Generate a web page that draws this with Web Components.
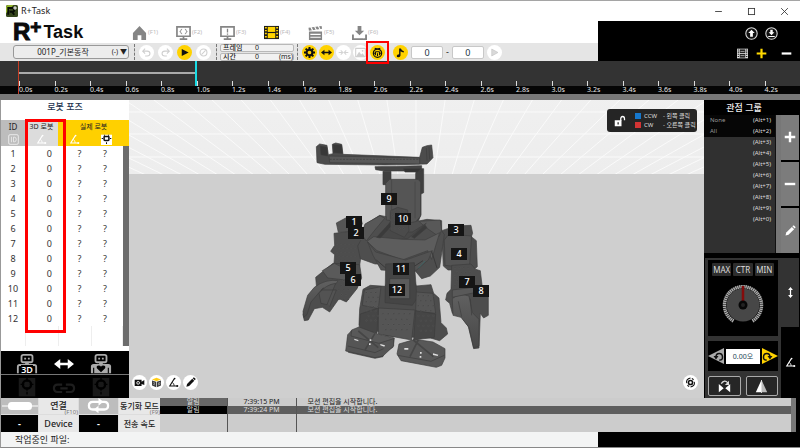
<!DOCTYPE html>
<html lang="ko">
<head>
<meta charset="utf-8">
<title>R+Task</title>
<style>
  html, body { margin: 0; background: #fff; }
  body { font-family: "Noto Sans", "Noto Sans CJK KR", sans-serif; font-size: 9px; line-height: 12px; color: #222; }
</style>
</head>
<body>
<rt-app></rt-app>
<script>
const BASE = `
  *, *::before, *::after { box-sizing: border-box; }
  button { appearance: none; border: 0; padding: 0; margin: 0; background: none; color: inherit; font: inherit; cursor: pointer; display: flex; align-items: center; justify-content: center; }
  input, select { appearance: none; margin: 0; padding: 0; font: inherit; color: inherit; min-width: 0; }
  table { border-collapse: collapse; border-spacing: 0; }
  td, th { padding: 0; font-weight: 400; }
`;

function define(name, css, html) {
  const template = document.createElement('template');
  template.innerHTML = `<style>${BASE}${css}</style>${html}`;
  customElements.define(name, class extends HTMLElement {
    constructor() {
      super();
      this.attachShadow({ mode: 'open' }).append(template.content.cloneNode(true));
    }
  });
}

const film = (fill, line) => `<rect x="0" y="1" width="16" height="14" fill="${line}"/><rect x="4" y="2" width="8" height="5.4" fill="${fill}"/><rect x="4" y="8.6" width="8" height="5.4" fill="${fill}"/><path d="M1 3h2M1 6h2M1 9h2M1 12.500h2M13 3h2M13 6h2M13 9h2M13 12.500h2" stroke="${fill}" stroke-width="1.500"/>`;
const angle = `<path d="M9.500 2L2.500 13H13" fill="none" stroke="currentColor" stroke-width="1.500"/><path d="M6 8Q9 9 9 13" fill="none" stroke="currentColor" stroke-width="1.200"/><circle cx="9.700" cy="2.300" r="1.200" fill="currentColor"/><circle cx="13.500" cy="13" r="1.500" fill="currentColor"/>`;
const pencil = `<path d="M2 14l1-4 7.500-7.500 3 3L6 13z" fill="currentColor"/><path d="M11.200 1.800l1-1q.8-.5 1.500.2l1.300 1.300q.7.7.2 1.500l-1 1z" fill="currentColor"/>`;

const ICONS = {
  app: `<rect width="16" height="16" rx="2" fill="#37471d"/><path d="M0 11L0 3Q0 0 3 0L10 0Z" fill="#92b42c"/><path d="M3 13V4h5q3 0 3 2.500T8 9L11 13M5 9H8" fill="none" stroke="#080d04" stroke-width="2.500"/><path d="M12 1.500v5M9.500 4h5" stroke="#fff" stroke-width="1.300"/>`,
  minimize: `<path d="M2 8h12" stroke="#333" stroke-width="1.500"/>`,
  maximize: `<rect x="2.500" y="2.500" width="11" height="11" fill="none" stroke="#333" stroke-width="1.500"/>`,
  close: `<path d="M2 2l12 12M14 2L2 14" stroke="#333" stroke-width="1.500"/>`,
  home: `<path d="M8 1L1 8.500V16h5v-5h4v5h5V8.500z" fill="#858585"/>`,
  code: `<path d="M1 2h14v10H1zM8 12v3M4 15h8" fill="none" stroke="#858585" stroke-width="1.800"/><path d="M6.500 4.500q-1.300 0-1.300 1.200T4 7q1.200 0 1.200 1.200t1.300 1.200M9.500 4.500q1.300 0 1.300 1.200T12 7q-1.200 0-1.200 1.200T9.500 9.400" fill="none" stroke="#858585"/>`,
  alert: `<path d="M1 2h14v10H1zM8 12v3M4 15h8" fill="none" stroke="#858585" stroke-width="1.800"/><path d="M8 4v4M8 9v1.300" stroke="#858585" stroke-width="1.400"/>`,
  film: film('#ffd400', '#1b1b1b'),
  filmGray: film('#222', '#ddd') + `<path d="M5 5h6M5 11h6" stroke="#ccc"/>`,
  clap: `<path d="M1 7h14v9H1zM0.500 3l14-2 .5 3-14 2z" fill="#858585"/><path d="M3 2l2 4M7 1.500l2 4M11 1l2 4M2.500 10h11M2.500 13h11" stroke="#fff" stroke-width="1.200"/>`,
  download: `<path d="M6 1h4v5h3L8 11 3 6h3z" fill="#858585"/><path d="M1 10v5h14v-5" fill="none" stroke="#858585" stroke-width="2"/><circle cx="12.500" cy="13" r="1" fill="#fff"/>`,
  undo: `<path d="M3 6h6q4 0 4 3.500T9 13H6M6 2.500L2.500 6 6 9.500" fill="none" stroke="#cfcfcf" stroke-width="1.600"/>`,
  redo: `<path d="M13 6H7Q3 6 3 9.500T7 13h3M10 2.500L13.500 6 10 9.500" fill="none" stroke="#cfcfcf" stroke-width="1.600"/>`,
  play: `<path d="M4 3l10 5-10 5z" fill="#111"/>`,
  playOff: `<path d="M4 3l9 5-9 5z" fill="#d9d9d9" stroke="#c5c5c5"/>`,
  stop: `<circle cx="8" cy="8" r="5" fill="none" stroke="#cfcfcf" stroke-width="1.600"/><path d="M5 11l6-6" stroke="#cfcfcf" stroke-width="1.500"/>`,
  gear: `<circle cx="8" cy="8" r="4.200" fill="none" stroke="#111" stroke-width="3"/><path d="M8 0v3M8 13v3M0 8h3M13 8h3M2.400 2.400l2 2M11.600 11.600l2 2M13.600 2.400l-2 2M4.400 11.600l-2 2" stroke="#111" stroke-width="2.800"/>`,
  both: `<path d="M0 8l5-4v3h6V4l5 4-5 4V9H5v3z" fill="currentColor"/>`,
  inward: `<path d="M1 8h5M15 8h-5M4 5l3 3-3 3M12 5L9 8l3 3" fill="none" stroke="#d3d3d3" stroke-width="1.500"/>`,
  image: `<path d="M1 2h14v12H1z" fill="none" stroke="#cfcfcf" stroke-width="1.500"/><path d="M2 13l4-6 3 4 2-2 3 4z" fill="#cfcfcf"/><circle cx="11" cy="5.500" r="1.300" fill="#cfcfcf"/>`,
  pose: `<circle cx="8" cy="9" r="6" fill="none" stroke="#111" stroke-width="1.800"/><path d="M4 2l4 1M12 2L8 3M5 12V8q0-1 1-1h4q1 0 1 1v4M8 9v4M3 9h2M11 9h2" fill="none" stroke="#111" stroke-width="1.600"/>`,
  note: `<path d="M6 2h2.500q1 3 4.500 4l-.5 2Q10 7.500 8 6v6.500q-.3 2.500-3 2.500t-2.500-2T6 10.500z" fill="#111"/>`,
  up: `<circle cx="8" cy="8" r="7" fill="#111" stroke="#ddd" stroke-width="1.300"/><path d="M8 3.500l4 4H9.700V12H6.300V7.500H4z" fill="#fff"/>`,
  down: `<circle cx="8" cy="8" r="7" fill="#111" stroke="#ddd" stroke-width="1.300"/><path d="M6.500 3.500h3v3h2L8 10 4.500 6.500h2zM4 11h8v1.300H4z" fill="#fff"/>`,
  plus: `<path d="M8 1v14M1 8h14" stroke="currentColor" stroke-width="3.200"/>`,
  minus: `<path d="M1 8h14" stroke="currentColor" stroke-width="3.200"/>`,
  pencil, angle,
  id: `<rect x="1" y="1" width="14" height="14" rx="2" fill="none" stroke="#eee" stroke-width="1.300"/><path d="M5 4v8M8 4.500h1q3 0 3 3.500t-3 3.500H8z" fill="none" stroke="#eee" stroke-width="1.200"/>`,
  motor: `<path d="M0 1h16v15H0z" fill="#fff"/><rect x="4.500" y="3.500" width="7" height="6" rx="1" fill="none" stroke="#111" stroke-width="2.200"/><path d="M1 6.500h2M13 6.500h2M8 12v2.500M5 1v1.500M11 1v1.500" stroke="#111" stroke-width="1.500"/>`,
  robot3d: `<rect x="6" y="1" width="12" height="8" rx="2" fill="none" stroke="#aaa" stroke-width="2"/><path d="M9 5h2M13 5h2M10 10.500h4" stroke="#aaa" stroke-width="2"/><path d="M2 21v-7q0-2 2-2h16q2 0 2 2v7" fill="none" stroke="#aaa" stroke-width="2"/>`,
  robot: `<rect x="6" y="1" width="12" height="8" rx="2" fill="none" stroke="#aaa" stroke-width="2"/><path d="M9 5h2M13 5h2M10 10.500h4" stroke="#aaa" stroke-width="2"/><path d="M1 21v-7q0-3 3-3h16q3 0 3 3v7z" fill="#aaa"/><path d="M4 15v6M20 15v6" stroke="#000" stroke-width="1.200"/><path d="M12 20l-4.500-4.500q-1-3 2-3 2 0 2.500 1.500.5-1.500 2.500-1.500 3 0 2 3z" fill="#000"/>`,
  servo: `<rect x="3" y="0" width="18" height="20" fill="#191919"/><circle cx="12" cy="7" r="4.500" fill="none" stroke="#000" stroke-width="2.500"/><path d="M12 0v4M12 10v4M5 7h4M15 7h4M12 15v3" stroke="#000" stroke-width="1.500"/>`,
  chain: `<path d="M10 4H5Q1 4 1 8t4 4h5M14 4h5q4 0 4 4t-4 4h-5M8 8h8" fill="none" stroke="#1e1e1e" stroke-width="2.400"/>`,
  plug: `<path d="M0 8h8M28 8h8" stroke="#fff" stroke-width="1.200"/><rect x="6" y="4" width="24" height="8" rx="3.500" fill="#fff"/>`,
  sync: `<path d="M9 12H6q-4 0-4-4t4-4h7M15 4h3q4 0 4 4t-4 4h-7" fill="none" stroke="#fff" stroke-width="2.400"/><path d="M12 0l5 4-5 4zM12 8l-5 4 5 4z" fill="#fff"/>`,
  camera: `<path d="M1 4h10v9H1zM11 7l4-2.500v7L11 10z" fill="#111"/><circle cx="6" cy="8.500" r="2" fill="#111" stroke="#fff" stroke-width="1.300"/>`,
  cube: `<path d="M8 1l6.500 2.500L8 6 1.500 3.500z" fill="#ffcd17"/><path d="M1.500 5L7.500 7v8l-6-2.500zM14.500 5L8.500 7v8l6-2.500z" fill="#3a3a3a"/><path d="M3 7.500l2 .7v3l-2-.7M11 8.500l2-.6v2.800l-2 .8z" fill="none" stroke="#aaa"/>`,
  orbit: `<circle cx="8" cy="8" r="3" fill="none" stroke="#111" stroke-width="2.300"/><path d="M2.500 9Q1 3 8 1.500M13.500 7Q15 13 8 14.500M3.500 12l2.500 2M10 2l2.500 2" fill="none" stroke="#111" stroke-width="1.500"/>`,
  lock: `<rect x="1" y="7" width="9" height="8" fill="#fff"/><path d="M9 8V5q0-3 2.500-3T14 5v2" fill="none" stroke="#fff" stroke-width="1.700"/><path d="M5.500 9.500v3" stroke="#222" stroke-width="1.700"/>`,
  updown: `<path d="M8 3v10" stroke="#fff" stroke-width="1.800"/><path d="M8 0l3.500 4.500h-7zM8 16l3.500-4.500h-7z" fill="#fff"/>`,
  left: `<path d="M16 0v16L0 8z" fill="#aaa"/><path d="M8 9q0-3.500 3.200-3.500T14.500 9t-3.200 3" fill="none" stroke="#111" stroke-width="1.500"/><path d="M5.500 8h5L8 11.500z" fill="#111"/>`,
  right: `<path d="M0 0v16l16-8z" fill="#ffd200"/><path d="M8 9q0-3.500-3.200-3.500T1.500 9t3.200 3" fill="none" stroke="#111" stroke-width="1.500"/><path d="M10.500 8h-5L8 11.500z" fill="#111"/>`,
  flip: `<path d="M1 5v10l6-5zM15 5v10l-6-5z" fill="#fff"/><path d="M4 4.500Q8-1 12 3.500" fill="none" stroke="#ddd" stroke-width="1.600"/><path d="M13.500 1v5h-5z" fill="#ddd"/>`,
  mirror: `<path d="M7.500 1v14H1z" fill="#fff"/><path d="M8.500 1v14H15z" fill="#bbb"/><path d="M8 0v16" stroke="#fff"/>`
};
const BOXES = { robot3d: '0 0 24 22', robot: '0 0 24 22', servo: '0 0 24 22', chain: '0 0 24 16', plug: '0 0 36 16', sync: '0 0 24 16' };

customElements.define('rt-icon', class extends HTMLElement {
  constructor() { super(); this.attachShadow({ mode: 'open' }); }
  connectedCallback() {
    const name = this.getAttribute('name');
    this.shadowRoot.innerHTML = `<style>:host{display:block;flex:none;width:var(--icon,12px)}svg{display:block;width:100%;height:auto;overflow:visible}</style>
      <svg viewBox="${BOXES[name] || '0 0 16 16'}" aria-hidden="true">${ICONS[name] || ''}</svg>`;
  }
});

define('rt-round', `
  :host { display: block; flex: none; position: relative; }
  button { width: 15px; height: 15px; border-radius: 50%; background: #fff; --icon: 11px; color: #111; }
  :host([on]) button { background: #ffd200; }
  :host([marked])::after { content: ""; position: absolute; inset: -4px; border: 2px solid #f00; }
`, `<button><slot></slot></button>`);

define('rt-titlebar', `
  :host { display: flex; align-items: center; height: 21px; padding: 0 10px 0 6px; background: #fff; border-top: 1px solid #a5a5a5; font-size: 9px; gap: 3px; box-sizing: border-box; }
  span { flex: 1; }
  nav { display: flex; gap: 21px; --icon: 9px; }
  button { width: 12px; height: 16px; }
`, `<rt-icon name="app"></rt-icon><span>R+Task</span>
  <nav><button aria-label="Minimize"><rt-icon name="minimize"></rt-icon></button><button aria-label="Maximize"><rt-icon name="maximize"></rt-icon></button><button aria-label="Close"><rt-icon name="close"></rt-icon></button></nav>`);

define('rt-nav', `
  :host { display: flex; align-items: center; height: 22px; padding-left: 13px; background: #fff; }
  .logo { display: flex; width: 119px; font: 700 18px/22px "Liberation Sans", sans-serif; color: #0b0b0b; }
  .r { font-size: 24px; -webkit-text-stroke: 1px #0b0b0b; }
  .p { font-size: 19px; line-height: 12px; -webkit-text-stroke: 1px #0b0b0b; }
  .t { padding-left: 2px; }
  button { width: 44px; justify-content: flex-start; gap: 1px; font-size: 6px; color: #bbb; --icon: 15px; }
`, `<div class="logo"><span class="r">R</span><span class="p">+</span><span class="t">Task</span></div>
  ${['home', 'code', 'alert', 'film', 'clap', 'download'].map((n, i) => `<button><rt-icon name="${n}"></rt-icon>(F${i + 1})</button>`).join('')}`);

define('rt-toolbar', `
  :host { display: flex; align-items: center; height: 18px; padding-left: 13px; background: #e5e5e5; }
  .file { display: grid; width: 116px; height: 14px; align-items: center; }
  .file > * { grid-area: 1 / 1; }
  select { width: 100%; height: 14px; border: 1px solid #999; border-radius: 3px; background: #ededed; text-align: center; text-align-last: center; font-size: 8px; padding-right: 16px; }
  .file span { justify-self: end; padding-right: 2px; font-size: 7px; pointer-events: none; }
  i { width: 0; height: 16px; border-left: 1px dashed #777; }
  .group { display: flex; align-items: center; gap: 4px; }
  .time { display: grid; gap: 1px; width: 74px; font-size: 7px; line-height: 7px; }
  label { display: flex; height: 8px; border: 1px solid #b8b8b8; border-radius: 2px; background: #f1f1f1; padding-left: 2px; align-items: center; }
  label span { width: 24px; font-weight: 500; }
  label input { width: 20px; border: 0; background: none; text-align: center; height: 7px; }
  label em { flex: 1; text-align: right; font-style: normal; }
  .num { width: 32px; height: 13px; border: 1px solid #c8c8c8; border-radius: 2px; background: #fff; text-align: center; color: #234; }
`, `<div class="file"><select aria-label="File"><option>001P_기본동작</option></select><span>(-) <b>▼</b></span></div>
  <i style="margin:0 4px 0 5px"></i>
  <div class="group">
    <rt-round><rt-icon name="undo"></rt-icon></rt-round><rt-round><rt-icon name="redo"></rt-icon></rt-round>
    <rt-round on><rt-icon name="play"></rt-icon></rt-round><rt-round><rt-icon name="stop"></rt-icon></rt-round></div>
  <i style="margin:0 3px 0 5px"></i>
  <div class="time"><label><span>프레임</span><input value="0"></label><label><span>시간</span><input value="0"><em>(ms)</em></label></div>
  <i style="margin:0 4px 0 3px"></i>
  <div class="group" style="gap:2px">
    <rt-round on><rt-icon name="gear"></rt-icon></rt-round><rt-round on><rt-icon name="both"></rt-icon></rt-round>
    <rt-round><rt-icon name="inward"></rt-icon></rt-round><rt-round><rt-icon name="image"></rt-icon></rt-round>
    <rt-round on marked><rt-icon name="pose"></rt-icon></rt-round></div>
  <div class="group" style="padding-left:8px;gap:3px">
    <rt-round on><rt-icon name="note"></rt-icon></rt-round><input class="num" value="0" aria-label="From"><span>-</span><input class="num" value="0" aria-label="To">
    <rt-round><rt-icon name="playOff"></rt-icon></rt-round></div>`);

define('rt-header', `
  :host { display: grid; grid-template-columns: minmax(0, 598fr) minmax(0, 202fr); height: 40px; }
  .tools { background: #000; display: grid; grid-template-rows: 25px 15px; }
  .tools div { display: flex; justify-content: flex-end; align-items: center; }
  .a { gap: 7px; padding-right: 22px; --icon: 13px; }
  .b { gap: 14px; padding-right: 8px; --icon: 11px; color: #fff; }
  .y { color: #ffd900; }
`, `<div><rt-nav></rt-nav><rt-toolbar></rt-toolbar></div>
  <div class="tools"><div class="a"><button aria-label="Upload"><rt-icon name="up"></rt-icon></button><button aria-label="Download"><rt-icon name="down"></rt-icon></button></div>
  <div class="b"><button aria-label="Frames" style="margin-right:-6px"><rt-icon name="filmGray"></rt-icon></button><button class="y" aria-label="Add"><rt-icon name="plus"></rt-icon></button><button aria-label="Remove"><rt-icon name="minus"></rt-icon></button></div></div>`);

define('rt-timeline', `
  :host { display: block; height: 39px; padding-left: 18px; background: linear-gradient(#333 0 25px, #050505 25px 33px, #777 33px); overflow: hidden; }
  .track { position: relative; display: grid; grid-template-columns: repeat(22, minmax(0, 1fr)); align-items: end; height: 33px; border-left: 1px solid #c63d25; font-size: 7px; line-height: 8px; color: #e6e6e6; }
  .track > span::before { content: ""; display: block; width: 1px; height: 5px; background: #ddd; }
  .clip { position: absolute; left: 0; top: 0; width: calc(100% * 5 / 22); height: 25px; border-right: 2px solid #19dbe4; background: linear-gradient(transparent 11px, #aaa 11px 13px, transparent 13px); }
`, `<div class="track">${Array.from({ length: 22 }, (_, i) => `<span>${(i / 5).toFixed(1)}s</span>`).join('')}<div class="clip"></div></div>`);

define('rt-pose-panel', `
  :host { display: flex; flex-direction: column; position: relative; background: #fff; border-left: 1px solid #999; }
  h2 { margin: 0; height: 20px; font-size: 9px; line-height: 14px; font-weight: 500; text-align: center; color: #24344f; }
  table { width: 100%; table-layout: fixed; text-align: center; }
  thead { background: #ffd000; font-size: 8px; line-height: 12px; }
  thead th { height: 13px; white-space: nowrap; }
  thead .n { font-size: 7px; }
  thead rt-icon { margin: 0 auto; --icon: 11px; color: #fff; }
  .g { background: #bdbdbd; } .l { background: #dcdcdc; }
  tbody td { height: 15px; line-height: 15px; font-size: 9px; color: #333; }
  tbody td:nth-child(2) { text-align: right; padding-right: 6px; }
  tbody td:nth-child(3) { padding-left: 10px; } tbody td:nth-child(4) { padding-right: 4px; }
  .bar { background: #6c6c6c; }
  .blank td { height: 20px; border-right: 1px solid #eee; }
  .mark { position: absolute; left: 24px; top: 19px; width: 41px; height: 214px; border: 3px solid #f00; pointer-events: none; }
  .mode { margin-top: auto; display: grid; gap: 1px; background: #777; }
  .mode > div { display: flex; align-items: flex-end; justify-content: space-between; height: 23px; padding: 0 17px 0 15px; background: #000; color: #fff; --icon: 22px; }
  .mode button { position: relative; height: 20px; }
  .mode button span { position: absolute; bottom: 0; background: #000; font-weight: 600; font-size: 9px; line-height: 9px; }
`, `<h2>로봇 포즈</h2>
  <table><colgroup><col style="width:24px"><col style="width:33px"><col style="width:33px"><col><col style="width:6px"></colgroup>
  <thead><tr><th class="g">ID</th><th class="l n">3D 로봇</th><th class="n" colspan="3">실제 로봇</th></tr>
  <tr><th class="g"><rt-icon name="id"></rt-icon></th><th class="l"><rt-icon name="angle"></rt-icon></th><th><rt-icon name="angle"></rt-icon></th><th><rt-icon name="motor"></rt-icon></th><th></th></tr></thead>
  <tbody>${Array.from({ length: 12 }, (_, i) => `<tr><td>${i + 1}</td><td>0</td><td>?</td><td>?</td>${i ? '' : '<td class="bar" rowspan="13"></td>'}</tr>`).join('')}
  <tr class="blank"><td></td><td></td><td></td><td></td></tr></tbody></table>
  <div class="mark"></div>
  <div class="mode"><div><button><rt-icon name="robot3d"></rt-icon><span>3D</span></button><button aria-label="Copy pose" style="--icon:20px"><rt-icon name="both"></rt-icon></button><button aria-label="Robot"><rt-icon name="robot"></rt-icon></button></div>
  <div><button aria-label="Servo"><rt-icon name="servo"></rt-icon></button><button aria-label="Link"><rt-icon name="chain"></rt-icon></button><button aria-label="Servo"><rt-icon name="servo"></rt-icon></button></div></div>`);

const labels = [[1, 354, 222], [2, 356, 233], [3, 456, 230], [4, 459, 254], [5, 348, 268], [6, 353, 280], [7, 467, 282], [8, 481, 291], [9, 389, 199], [10, 403, 219], [11, 401, 269], [12, 397, 290]];
const wall = Array.from({ length: 33 }, (_, i) => { const x = 128 + i * 18; return `M${416 + (x - 416) * 1.7} 90L${x} 175`; }).join('');
const holes = (x0, y0, x1, y1, s) => { let d = ''; let k = 0; for (let y = y0; y < y1; y += s) for (let x = x0 + (k++ % 2) * s / 2; x < x1; x += s) d += `M${x} ${y}h4v3h-4z`; return d; };

define('rt-robot', `
  :host { display: block; height: 100%; }
  svg { display: block; width: 100%; height: 100%; }
  text { font: 500 9px "Noto Sans", sans-serif; fill: #fff; text-anchor: middle; }
`, `<svg viewBox="129 100 575 298" preserveAspectRatio="xMidYMid slice" role="img" aria-label="3D robot">
  <defs>
    <linearGradient id="w" x2="0" y2="1"><stop stop-color="#f3f3f3"/><stop offset="1" stop-color="#ededed"/></linearGradient>
    <linearGradient id="m" x2="0" y2="1"><stop stop-color="#606060"/><stop offset="1" stop-color="#484848"/></linearGradient>
  </defs>
  <rect x="0" y="0" width="900" height="174" fill="url(#w)"/>
  <path d="${wall}M129 157H704M129 134H704M129 112H704" stroke="#fafafa" stroke-width="1" fill="none"/>
  <rect x="0" y="174" width="900" height="400" fill="#cfcfcf"/>
  <g transform="translate(295 130) scale(.3333)" fill="#4c4c4c" stroke="#3c3c3c" stroke-width="2" stroke-linejoin="round">
    <path d="M264 124h24v40h-24zM366 116h20v72l-8 4v62l-8 20h-8V130z" fill="#3f3f3f"/>
    <path d="M272 160l12-12h85l8 8v102l-20 24-13 38h-50l-22-40z" fill="#555"/>
    <path d="M290 150v160M360 155v110" stroke="#444"/>
    <path d="M240 110l140-3v16h-112l-26-4z" fill="#444"/>
    <path d="M64 50l10-8 22 4 4 28 14-3-2-28 10-4 18 4 4 30 230 9 8-30 14-5 14-2 4 38-18 19-126 3L90 103 66 98z"/>
    <path d="M102 78l272 6v18l-270-4z" fill="#585858"/><path d="M76 48l20 4 2 26-20-4zM114 44l26 2 2 24-26-2z" fill="#383838"/>
    <path d="M104 88h270" stroke="#3e3e3e" stroke-dasharray="6 4"/><path d="M326 116h52l-10 10h-38z" fill="#333"/>
    <path d="M394 54l2 38M402 50l2 38" fill="none"/>
  </g>
  <g transform="translate(295 190) scale(.3333)" fill="#4d4d4d" stroke="#3e3e3e" stroke-width="2" stroke-linejoin="round">
    <path d="M124 99l34-18 40 6 4 14-14 26H130z" fill="#555"/>
    <path d="M117 130l70-8 10 20v64l-6 40-64-2-10-24 2-26-12-10 12-18z"/>
    <path d="M440 122l42-14 46-2 5 24-4 10 15 12 3 78-12 10h-76l-14-12z"/>
    <path d="M448 150l14-18 68 6-6 86-6 10-68-8z" fill="#535353"/>
    <path d="M196 130l20-30 38-24 20 4v10l72 8 50-10 44 4v30l8 12-14 98-28 26-26 8-36-44H240l-44-16-8-38 12-22z" fill="#4e4e4e"/>
    <path d="M210 102l45-25 14 8-35 42-20 26-14-20z" fill="#585858"/><path d="M372 94l64-4 4 30-8 20-40-28z" fill="#585858"/>
    <path d="M250 140l42-50 34 36h26l42-26-56 46-90 8z" fill="#484848"/>
    <path d="M216 154l20-14 86 8 68 2 44-22-24 80-12-26-76 28-76-28z" fill="#5d5d5d"/>
    <path d="M218 156l24 30 90 24 80-28-12 28-42 36-100-6-24-44z" fill="#525252"/>
    <path d="M245 142l40-44 6 8-35 38zM350 140l40-35 6 8-38 32z" fill="#3b3b3b"/>
    <path d="M286 62l22-10 30 8 4 62-14 20-42-20z" fill="#4b4b4b"/>
    <path d="M244 210l40 34 60-6 40-26M410 184l16 50" fill="none" stroke="#393939" stroke-width="3"/>
    <path d="M370 235l20-22" stroke="#356c6c"/>
    <path d="${holes(285, 62, 335, 124, 13)}${holes(124, 160, 180, 224, 12)}" fill="#343434" stroke="#666" stroke-width="1"/>
  </g>
  <g transform="translate(295 240) scale(.3333)" fill="#4d4d4d" stroke="#3c3c3c" stroke-width="2" stroke-linejoin="round">
    <path d="M62 112l52-42 80 4 6 40-14 32-32 40-22-10-28 40-22-14-24 4-18 34-12 2-4-18 14-46 28-20z"/>
    <path d="M82 92l36-22 60 30-10 22-70-8z" fill="#5a5a5a"/><path d="M58 142q34-26 72-20l-24 28-22-6-36 42-12 38-10 8-2-18 14-48z" fill="url(#m)"/>
    <path d="M72 160q20-26 50-30l-26 64-18-4zM78 150l46 0-20 50" fill="#535353"/>
    <path d="M470 76l58-4 14 16 14 4 6 50 18 14v70l-14 8-10-14-4 104-16 2-16-66-26-36-22-4-8-30-12-10 4-20 12-12z"/>
    <path d="M472 176q20-18 50-8l10 50 20 20v80l-16 6-14-62-24-30-24-6z" fill="url(#m)"/><path d="M490 184l10 46M526 176l4 50" fill="none"/>
    <path d="M472 150l80-10 16 12-96 20z" fill="#595959"/>
    <path d="M204 148l22-12 44 3 20-35h60l14 34 44-4 8 26 16 14 6 74 16 16 4 18-24 20-28-8-130-6-60-30-24-2 2-50z"/>
    <path d="M272 72l86-4 8 108-14 20-82-8z" fill="#454545"/><path d="M284 116h60v60h-60z" fill="#5b5b5b"/>
    <path d="M208 150l50-10-8 66-48-10zM364 156l50 4 8 60-60-6zM250 204l110 6-10 90-100-18z" fill="#555"/>
    <path d="M196 222l54-18-4 76-54-10zM362 212l60 10-4 70-62 8z" fill="#464646"/>
    <path d="M170 270l22-9 56 21 50 12-4 28-28 16-2 12-24 5-80-18-2-42z" fill="#595959"/>
    <path d="M158 284l12-12-2 16 84 22 44-14v22l-32 30-24 5-88-20z" fill="#555"/>
    <path d="M312 312l48-14 54 8 36 20v28l-10 22-16 6-106-20-12-20z" fill="#585858"/>
    <path d="M158 318l82 20 26-12M308 346l100 18 40-18" fill="none"/>
    <path d="M190 273l60 50M240 280l-30 50M355 300l60 50M370 300l-25 50" fill="none" stroke="#464646" stroke-width="5"/>
    <path d="M178 296l12 4v4l-12-4zM256 312l14 4-2 4-12-4zM328 324h12v5h-12zM414 340l16 4-2 4-14-3zM224 298h5v5h-5zM222 310h5v5h-5zM375 336h5v5h-5zM374 348h5v5h-5z" fill="#ddd" stroke="none"/>
    <path d="${holes(212, 156, 250, 250, 14)}${holes(262, 220, 345, 280, 16)}${holes(368, 166, 415, 280, 15)}${holes(478, 82, 530, 136, 13)}${holes(130, 120, 160, 180, 14)}" fill="#333" stroke="#686868" stroke-width="1"/>
  </g>
  ${labels.map(([n, x, y]) => `<rect x="${x - 8}" y="${y - 6}" width="16" height="12" fill="#151515"/><text x="${x}" y="${y + 3}">${n}</text>`).join('')}
</svg>`);

define('rt-viewport', `
  :host { display: block; position: relative; min-width: 0; overflow: hidden; }
  rt-robot { position: absolute; inset: 0; }
  .hint { position: absolute; right: 7px; top: 9px; display: flex; align-items: center; gap: 12px; width: 90px; height: 23px; padding: 0 6px 0 7px; border-radius: 3px; background: #252525; color: #ddd; font-size: 6px; line-height: 9px; --icon: 12px; }
  dl { margin: 0; display: grid; grid-template-columns: 7px 17px auto; column-gap: 2px; align-items: center; white-space: nowrap; margin-left: -3px; }
  dl i { width: 6px; height: 6px; background: #1677cc; } dl .r { background: #d23434; }
  dt, dd { margin: 0; }
  .tools, .orbit { position: absolute; bottom: 8px; display: flex; gap: 2px; }
  .tools { left: 3px; } .orbit { right: 6px; }
`, `<rt-robot></rt-robot>
  <div class="hint"><rt-icon name="lock"></rt-icon><dl><i></i><dt>CCW</dt><dd>- 왼쪽 클릭</dd><i class="r"></i><dt>CW</dt><dd>- 오른쪽 클릭</dd></dl></div>
  <div class="tools"><rt-round><rt-icon name="camera"></rt-icon></rt-round><rt-round><rt-icon name="cube"></rt-icon></rt-round><rt-round><rt-icon name="angle"></rt-icon></rt-round><rt-round><rt-icon name="pencil"></rt-icon></rt-round></div>
  <div class="orbit"><rt-round><rt-icon name="orbit"></rt-icon></rt-round></div>`);

define('rt-view-groups', `
  :host { display: grid; grid-template: 15px 1fr / minmax(0, 1fr) 5px 19px; background: #000; color: #ddd; }
  h2 { grid-column: 1 / -1; margin: 0; padding-right: 16px; font-size: 9px; line-height: 15px; font-weight: 500; text-align: center; color: #eee; }
  ul { margin: 0; padding: 0; list-style: none; background: #303030; border-right: 1px solid #111; font-size: 6px; line-height: 11px; }
  li { display: flex; justify-content: space-between; height: 11px; padding: 0 4px 0 6px; }
  li span:first-child { color: #999; }
  li:nth-child(-n+2) { background: #060606; }
  .bar { background: #777; }
  .btns { display: grid; grid-template-rows: repeat(3, 1fr); gap: 2px; padding-right: 1px; --icon: 12px; color: #fff; }
  .btns button { background: #7c7c7c; }
`, `<h2>관점 그룹</h2><ul>${['None', 'All', '', '', '', '', '', '', '', ''].map((n, i) => `<li><span>${n}</span><span>(Alt+${(i + 1) % 10})</span></li>`).join('')}</ul><div class="bar"></div>
  <div class="btns"><button aria-label="Add"><rt-icon name="plus"></rt-icon></button><button aria-label="Remove"><rt-icon name="minus"></rt-icon></button><button aria-label="Edit"><rt-icon name="pencil"></rt-icon></button></div>`);

define('rt-motor-control', `
  :host { display: grid; grid-template-columns: minmax(0, 1fr) 19px; background: #000; color: #ddd; padding-left: 1px; }
  .main { display: grid; grid-template-rows: 76px 30px 20px; gap: 5px; padding: 2px 3px; background: #333; }
  .dial, .turn { background: #000; }
  .dial { padding: 3px 4px; }
  .presets { display: flex; gap: 2px; }
  .presets button { flex: 1; height: 13px; background: #2d2d2d; border-radius: 1px; font-size: 8px; }
  .dial svg { display: block; width: 44px; margin: 7px auto 0; }
  .turn { display: flex; align-items: center; justify-content: center; gap: 2px; --icon: 16px; }
  input { width: 34px; height: 15px; border: 0; background: #fff; color: #245; text-align: center; font-size: 7px; }
  .flip { display: grid; grid-template-columns: 1fr 1fr; gap: 5px; --icon: 13px; }
  .flip button { border: 1px solid #aaa; border-radius: 2px; background: #262626; }
  .tabs { display: grid; grid-template-rows: 69px 1fr; padding-right: 1px; --icon: 11px; color: #fff; }
  .tabs button:first-child { background: #333; }
`, `<div class="main"><div class="dial"><div class="presets"><button>MAX</button><button>CTR</button><button>MIN</button></div>
  <svg viewBox="0 0 44 42" aria-hidden="true"><path d="M12.500 38A18.500 18.500 0 1 1 31.500 38" fill="none" stroke="#aaa" stroke-width="3.500" stroke-dasharray="1.500 .5"/><circle cx="22" cy="22" r="16.500" fill="#474747"/><path d="M22 3v19" stroke="#850b0b" stroke-width="2.500"/><circle cx="22" cy="22" r="4.500" fill="#070707"/><circle cx="22" cy="22" r="2" fill="#222"/></svg></div>
  <div class="turn"><button aria-label="Turn left"><rt-icon name="left"></rt-icon></button><input value="0.00오" aria-label="Angle"><button aria-label="Turn right"><rt-icon name="right"></rt-icon></button></div>
  <div class="flip"><button aria-label="Flip"><rt-icon name="flip"></rt-icon></button><button aria-label="Mirror"><rt-icon name="mirror"></rt-icon></button></div></div>
  <div class="tabs"><button aria-label="Move"><rt-icon name="updown"></rt-icon></button><button aria-label="Rotate"><rt-icon name="angle"></rt-icon></button></div>`);

define('rt-connection', `
  :host { display: grid; grid-template: 16px 17px / 37px 39px 39px 41px; gap: 1px; background: #ddd; border-left: 1px solid #999; }
  .i, .k { display: flex; align-items: center; justify-content: center; }
  .i { background: #bdbdbd; } .k { background: #000; color: #fff; font-weight: 700; }
  button { position: relative; background: #e8e8e8; font-size: 9px; font-weight: 500; line-height: 12px; white-space: nowrap; }
  .t { font-size: 8px; }
  small { position: absolute; right: 0; bottom: -2px; font-size: 6px; line-height: 8px; color: #777; font-weight: 400; }
`, `<div class="i" style="--icon:36px"><rt-icon name="plug"></rt-icon></div><button>연결<small>(F10)</small></button><div class="i" style="--icon:23px"><rt-icon name="sync"></rt-icon></div><button class="t">동기화 모드<small>(F9)</small></button>
  <div class="k">-</div><button>Device</button><div class="k">-</div><button class="t">전송 속도</button>`);

define('rt-log', `
  :host { display: grid; grid-template-columns: minmax(0, 1fr) 5px 4px; background: linear-gradient(to left, #000 4px, #777 4px 9px, #ccc 9px); overflow: hidden; }
  table { width: 100%; height: 34px; table-layout: fixed; font-size: 7px; line-height: 8px; }
  td { height: 8px; border-right: 1px solid #555; text-align: center; }
  td:last-child { text-align: left; padding-left: 11px; border: 0; }
  tr:first-child td:first-child { background: #666; color: #ddd; }
  .sel { background: #5e5e5e; color: #ddd; } .sel td:first-child { background: #000; }
  .rest td { height: 18px; }
`, `<table><colgroup><col style="width:67px"><col style="width:69px"><col></colgroup>
  <tr><td>알림</td><td>7:39:15 PM</td><td>모션 편집을 시작합니다.</td></tr><tr class="sel"><td>알림</td><td>7:39:24 PM</td><td>모션 편집을 시작합니다.</td></tr><tr class="rest"><td></td><td></td><td></td></tr></table>`);

define('rt-statusbar', `
  :host { display: flex; align-items: center; height: 16px; box-sizing: border-box; padding-left: 14px; background: linear-gradient(to right, #f3f4f4 74.75%, #000 74.75%); border-bottom: 1px solid #888; border-left: 1px solid #999; font-size: 9px; }
`, `<span>작업중인 파일:</span>`);

define('rt-app', `
  :host { display: grid; grid-template-rows: auto auto auto 1fr 34px auto; min-height: 100vh; }
  main { display: grid; grid-template-columns: 129px minmax(0, 1fr) 96px; }
  aside { display: grid; grid-template-rows: 153px 1fr; gap: 5px; background: #000; }
  footer { display: grid; grid-template-columns: auto minmax(0, 1fr); }
`, `<rt-titlebar></rt-titlebar><rt-header></rt-header><rt-timeline></rt-timeline>
  <main><rt-pose-panel></rt-pose-panel><rt-viewport></rt-viewport><aside><rt-view-groups></rt-view-groups><rt-motor-control></rt-motor-control></aside></main>
  <footer><rt-connection></rt-connection><rt-log></rt-log></footer>
  <rt-statusbar></rt-statusbar>`);
</script>
</body>
</html>
